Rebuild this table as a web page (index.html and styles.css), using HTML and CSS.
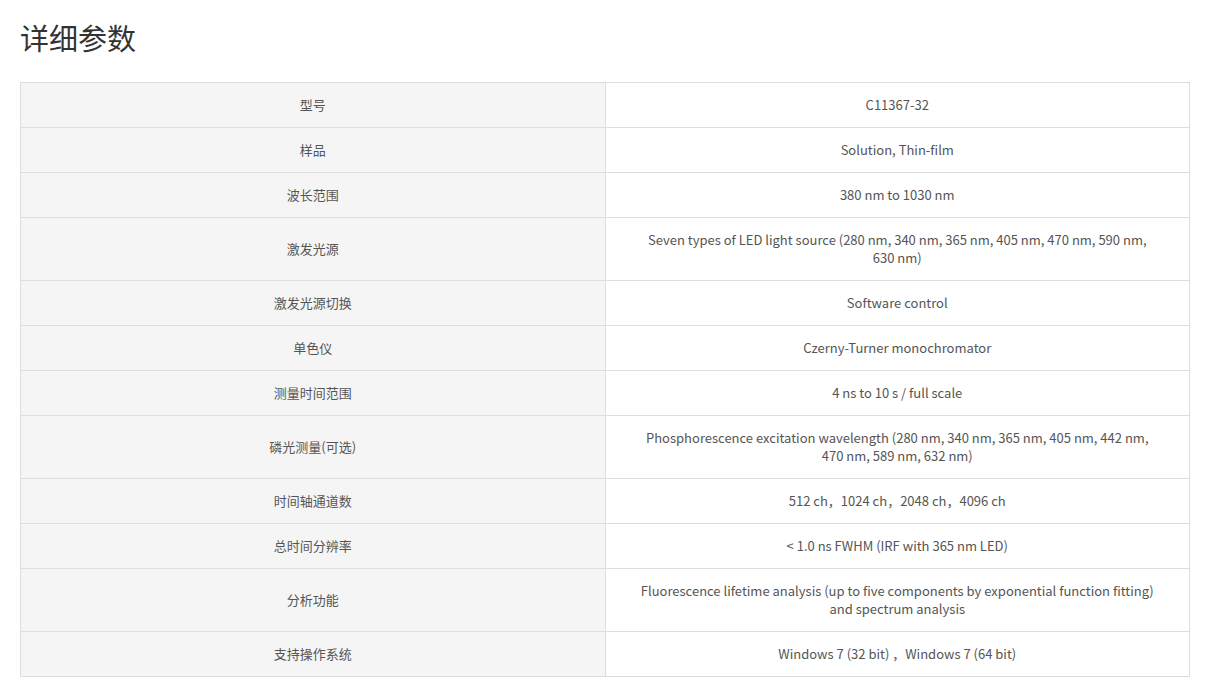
FILE: index.html
```html
<!DOCTYPE html>
<html lang="zh-CN">
<head>
<meta charset="utf-8">
<title>详细参数</title>
<link rel="stylesheet" href="styles.css">
</head>
<body>
<div class="page">
  <h2 class="title">详细参数</h2>
  <table class="spec">
    <colgroup><col class="col-key"><col class="col-val"></colgroup>
    <tbody>
      <tr><th>型号</th><td>C11367-32</td></tr>
      <tr><th>样品</th><td>Solution, Thin-film</td></tr>
      <tr><th>波长范围</th><td>380 nm to 1030 nm</td></tr>
      <tr><th>激发光源</th><td>Seven types of LED light source (280 nm, 340 nm, 365 nm, 405 nm, 470 nm, 590 nm, 630 nm)</td></tr>
      <tr><th>激发光源切换</th><td>Software control</td></tr>
      <tr><th>单色仪</th><td>Czerny-Turner monochromator</td></tr>
      <tr><th>测量时间范围</th><td>4 ns to 10 s / full scale</td></tr>
      <tr><th>磷光测量(可选)</th><td>Phosphorescence excitation wavelength (280 nm, 340 nm, 365 nm, 405 nm, 442 nm, 470 nm, 589 nm, 632 nm)</td></tr>
      <tr><th>时间轴通道数</th><td>512 ch，1024 ch，2048 ch，4096 ch</td></tr>
      <tr><th>总时间分辨率</th><td>&lt; 1.0 ns FWHM (IRF with 365 nm LED)</td></tr>
      <tr><th>分析功能</th><td>Fluorescence lifetime analysis (up to five components by exponential function fitting) and spectrum analysis</td></tr>
      <tr><th>支持操作系统</th><td>Windows 7 (32 bit) ，Windows 7 (64 bit)</td></tr>
    </tbody>
  </table>
</div>
</body>
</html>
```

FILE: styles.css
```css
html, body {
  margin: 0;
  padding: 0;
  background: #fff;
}
body {
  font-family: "Noto Sans CJK SC", sans-serif;
  color: #555;
}
.page {
  padding: 16px 20px 20px 20px;
}
.title {
  margin: 0 0 24px 0;
  font-family: "Noto Sans CJK SC", sans-serif;
  font-size: 29px;
  font-weight: 400;
  line-height: 42px;
  color: #333;
}
.spec {
  width: 1170px;
  border-collapse: collapse;
  table-layout: fixed;
  font-size: 13px;
  line-height: 18px;
}
.col-key, .col-val {
  width: 50%;
}
.spec th, .spec td {
  border: 1px solid #ddd;
  padding: 13px 33px;
  text-align: center;
  font-weight: 400;
  color: #555;
}
.spec th {
  background: #f5f5f5;
}
.spec td {
  background: #fff;
}
```
